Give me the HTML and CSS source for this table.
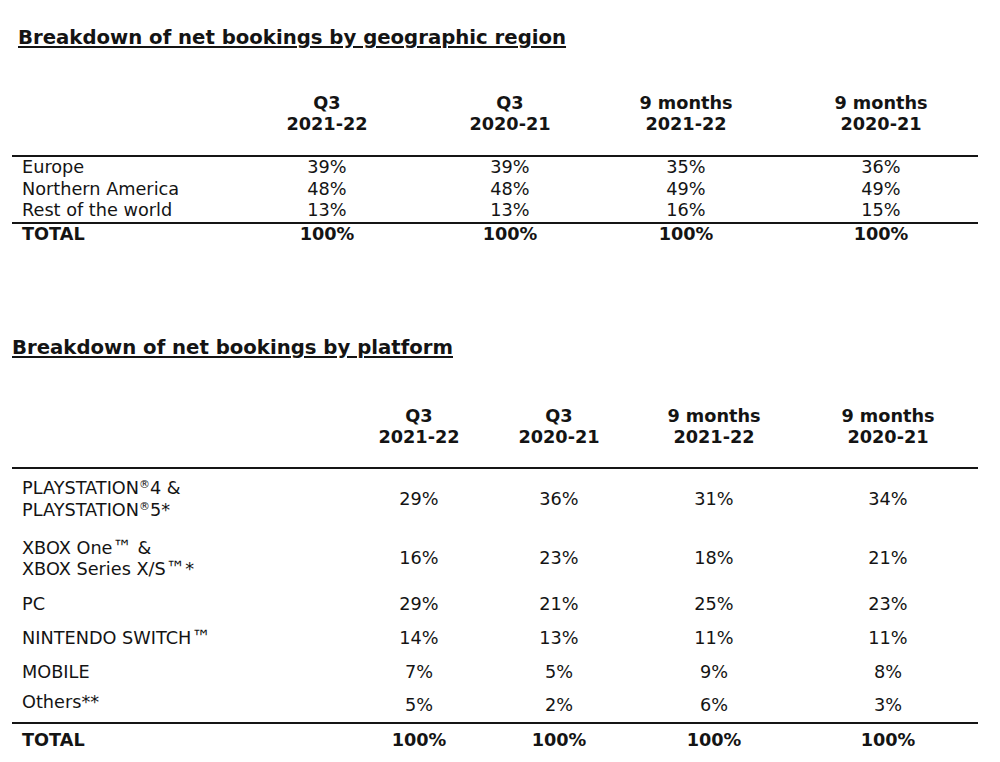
FILE: index.html
```html
<!DOCTYPE html>
<html>
<head>
<meta charset="utf-8">
<link rel="stylesheet" href="styles.css">
</head>
<body>
<div class="page">
  <h2 class="title title-geo">Breakdown of net bookings by geographic region</h2>
  <div class="tbl geo">
    <div class="row head">
      <div class="lab"></div>
      <div class="val">Q3<br>2021-22</div>
      <div class="val">Q3<br>2020-21</div>
      <div class="val">9 months<br>2021-22</div>
      <div class="val">9 months<br>2020-21</div>
    </div>
    <div class="row body first">
      <div class="lab">Europe</div><div class="val">39%</div><div class="val">39%</div><div class="val">35%</div><div class="val">36%</div>
    </div>
    <div class="row body">
      <div class="lab">Northern America</div><div class="val">48%</div><div class="val">48%</div><div class="val">49%</div><div class="val">49%</div>
    </div>
    <div class="row body">
      <div class="lab">Rest of the world</div><div class="val">13%</div><div class="val">13%</div><div class="val">16%</div><div class="val">15%</div>
    </div>
    <div class="row total">
      <div class="lab">TOTAL</div><div class="val">100%</div><div class="val">100%</div><div class="val">100%</div><div class="val">100%</div>
    </div>
  </div>

  <h2 class="title title-plat">Breakdown of net bookings by platform</h2>
  <div class="tbl plat">
    <div class="row head">
      <div class="lab"></div>
      <div class="val">Q3<br>2021-22</div>
      <div class="val">Q3<br>2020-21</div>
      <div class="val">9 months<br>2021-22</div>
      <div class="val">9 months<br>2020-21</div>
    </div>
    <div class="row body first r-ps">
      <div class="lab">PLAYSTATION<sup>®</sup>4 &amp;<br>PLAYSTATION<sup>®</sup>5*</div><div class="val">29%</div><div class="val">36%</div><div class="val">31%</div><div class="val">34%</div>
    </div>
    <div class="row body r-xb">
      <div class="lab">XBOX One<span class="tm">™</span> &amp;<br>XBOX Series X/S<span class="tm">™</span>*</div><div class="val">16%</div><div class="val">23%</div><div class="val">18%</div><div class="val">21%</div>
    </div>
    <div class="row body r-pc">
      <div class="lab">PC</div><div class="val">29%</div><div class="val">21%</div><div class="val">25%</div><div class="val">23%</div>
    </div>
    <div class="row body r-ns">
      <div class="lab">NINTENDO SWITCH<span class="tm">™</span></div><div class="val">14%</div><div class="val">13%</div><div class="val">11%</div><div class="val">11%</div>
    </div>
    <div class="row body r-mo">
      <div class="lab">MOBILE</div><div class="val">7%</div><div class="val">5%</div><div class="val">9%</div><div class="val">8%</div>
    </div>
    <div class="row body r-ot">
      <div class="lab">Others**</div><div class="val">5%</div><div class="val">2%</div><div class="val">6%</div><div class="val">3%</div>
    </div>
    <div class="row total r-tot">
      <div class="lab">TOTAL</div><div class="val">100%</div><div class="val">100%</div><div class="val">100%</div><div class="val">100%</div>
    </div>
  </div>
</div>
</body>
</html>
```

FILE: styles.css
```css
html, body {
  margin: 0;
  padding: 0;
  background: #ffffff;
}

body {
  font-family: "DejaVu Sans", Verdana, sans-serif;
  color: #141414;
  font-size: 17.7px;
}

.page {
  width: 966px;
  padding: 0 22px 0 12px;
}

.title {
  margin: 0;
  font-size: 19.7px;
  font-weight: bold;
  line-height: 22px;
  text-decoration: underline;
  text-decoration-thickness: 2px;
  text-underline-offset: 2px;
}

.title-geo {
  padding-top: 27px;
  padding-left: 6px;
}

.title-plat {
  margin-top: 92px;
}

.row {
  display: grid;
  align-items: center;
}

.geo .row {
  grid-template-columns: 210px 210px 156px 196px 194px;
}

.plat .row {
  grid-template-columns: 338px 138px 142px 168px 180px;
}

.lab {
  padding-left: 10px;
}

.val {
  text-align: center;
}

.head {
  font-weight: bold;
  line-height: 21px;
}

.geo .head {
  margin-top: 43.5px;
  padding-bottom: 20.5px;
}

.plat .head {
  margin-top: 46.5px;
  padding-bottom: 19.5px;
}

.first {
  border-top: 2px solid #151515;
}

.total {
  border-top: 2px solid #151515;
  font-weight: bold;
}

.geo .body,
.geo .total {
  line-height: 21.5px;
}

.plat .row.body,
.plat .row.total {
  line-height: 21.5px;
}

.r-ps { height: 61px; }
.r-xb { height: 58px; }
.r-pc { height: 34px; }
.r-ns { height: 34px; }
.r-mo { height: 33px; }
.r-ot { height: 33px; }
.r-tot { height: 34px; }

.r-ot .lab {
  align-self: start;
  padding-top: 3px;
}

sup {
  font-size: 0.62em;
  line-height: 0;
  vertical-align: 0.55em;
}

.tm {
  font-size: 1.1em;
  line-height: 0;
}
```
